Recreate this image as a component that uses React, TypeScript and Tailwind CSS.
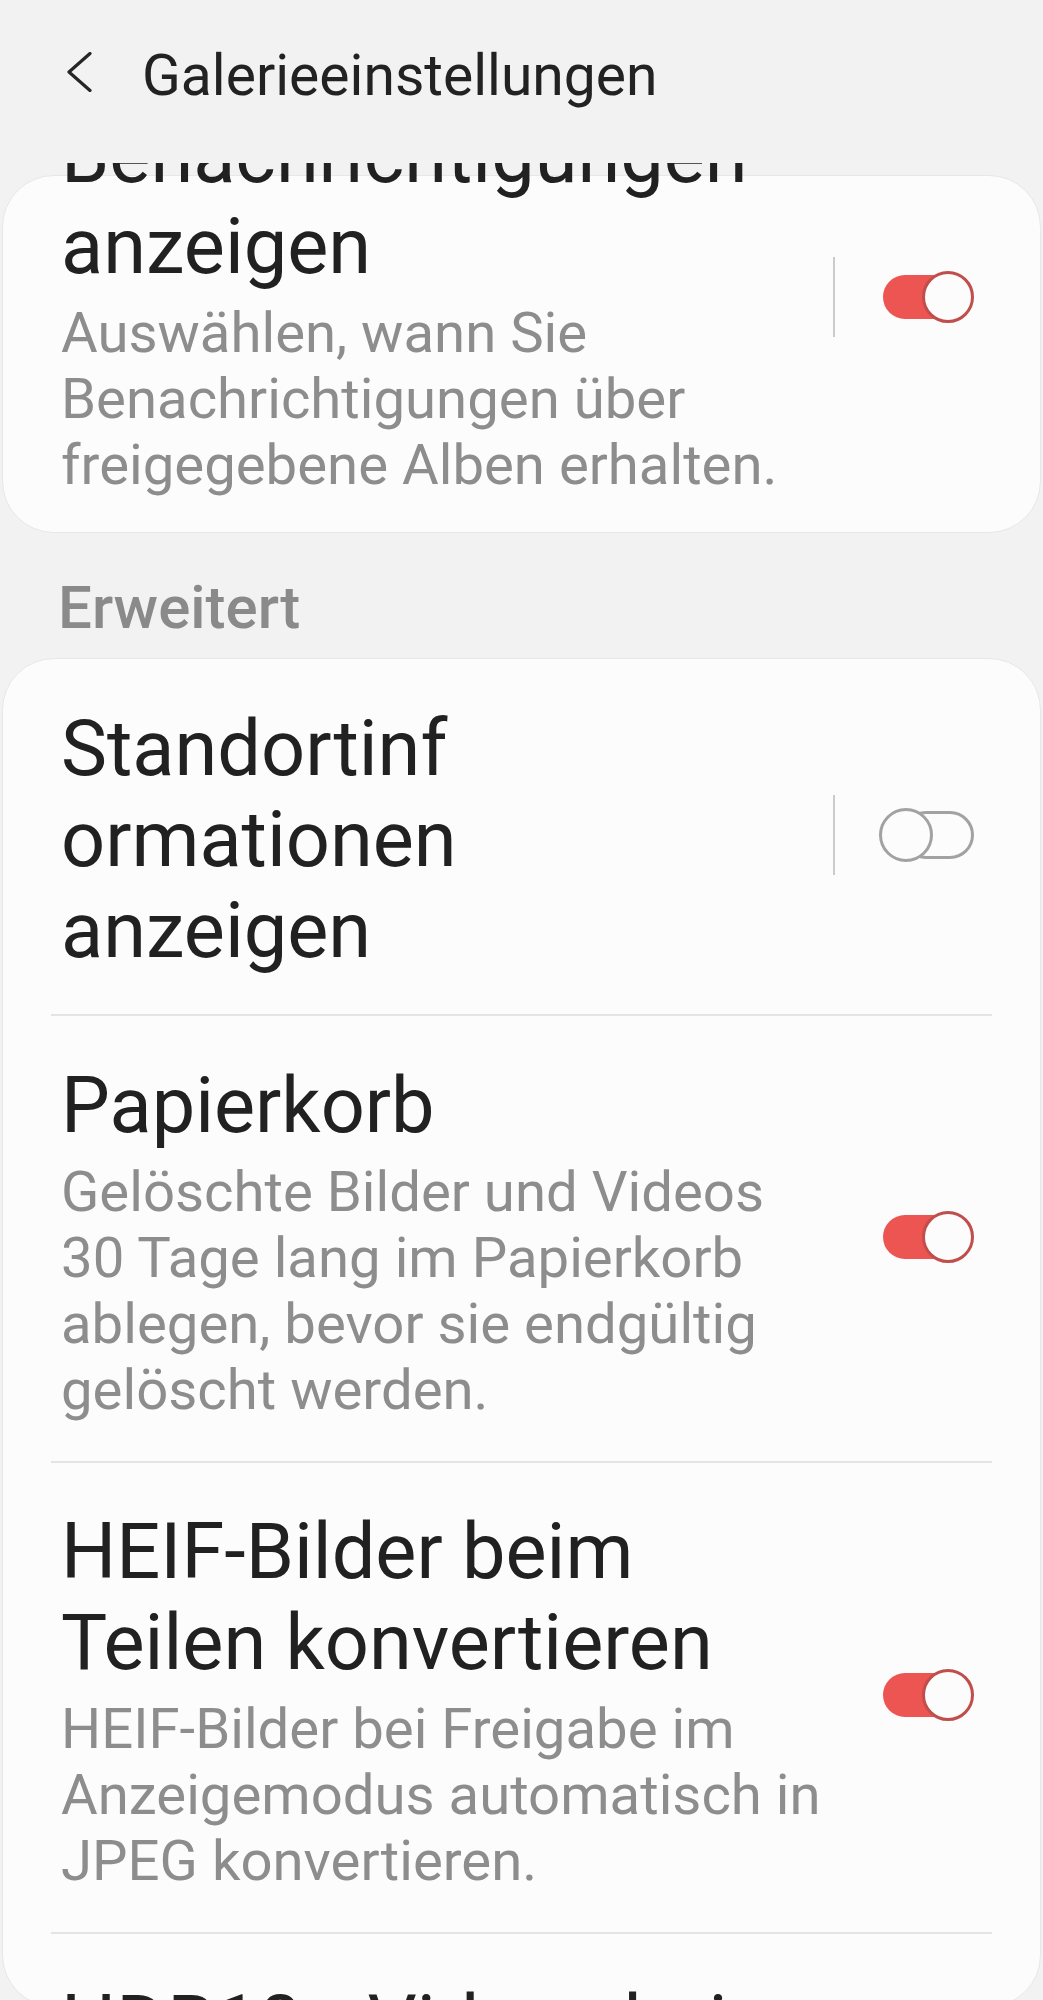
import React from "react";

function ToggleOn() {
  return (
    <div className="relative w-[91px] h-[52px]">
      <div className="absolute left-0 top-[4px] w-[80px] h-[44px] rounded-full bg-[#ec5552]" />
      <div className="absolute right-0 top-0 w-[52px] h-[52px] rounded-full bg-[#fcfcfc] border-[3px] border-[#c04e4b]" />
    </div>
  );
}

function ToggleOff() {
  return (
    <div className="relative w-[95px] h-[54px]">
      <div className="absolute right-0 top-[3px] w-[72px] h-[48px] rounded-full border-[3px] border-[#a2a2a2]" />
      <div className="absolute left-0 top-0 w-[54px] h-[54px] rounded-full bg-[#fcfcfc] border-[3px] border-[#a2a2a2]" />
    </div>
  );
}

function ToggleGroup({ on, divider, className = "" }: { on: boolean; divider: boolean; className?: string }) {
  return (
    <div className={"flex items-center shrink-0 " + className}>
      <div className={divider ? "w-[2px] h-[80px] bg-[#cbcbcb]" : "w-[2px] h-[80px]"} />
      <div className="w-[139px] flex justify-end">{on ? <ToggleOn /> : <ToggleOff />}</div>
    </div>
  );
}

function Title({ lines }: { lines: string[] }) {
  return (
    <div className="text-[77.5px] leading-[91px] text-[#212121] whitespace-nowrap">
      {lines.map((l, i) => (
        <div key={i}>{l}</div>
      ))}
    </div>
  );
}

function Desc({ lines }: { lines: string[] }) {
  return (
    <div className="mt-[8px] text-[56.3px] leading-[66px] text-[#8d8d8d] whitespace-nowrap">
      {lines.map((l, i) => (
        <div key={i}>{l}</div>
      ))}
    </div>
  );
}

function Divider() {
  return <div className="mx-[48px] h-[2px] bg-[#e4e4e4]" />;
}

export default function App() {
  return (
    <div className="h-[2000px] overflow-hidden bg-[#f2f2f2] font-['Roboto',sans-serif]">
      {/* Header */}
      <div className="relative z-10 h-[163px] bg-[#f2f2f2] flex items-start">
        <div className="ml-[66px] mt-[52px] w-[27px] h-[40px]">
          <svg width="27" height="40" viewBox="0 0 27 40" fill="none">
            <polyline
              points="24,1.5 3,20 24,38.5"
              stroke="#262626"
              strokeWidth="3.2"
              strokeLinecap="round"
              strokeLinejoin="round"
            />
          </svg>
        </div>
        <div className="ml-[49px] mt-[44px] text-[57px] leading-[64px] text-[#222222] whitespace-nowrap">
          Galerieeinstellungen
        </div>
      </div>

      {/* Card 1 */}
      <div className="mt-[12px] mx-[2px] rounded-[52px] bg-[#fcfcfc] border border-[#e7e7e7] pl-[58px] pr-[66px] pb-[34px]">
        <div className="flex items-start">
          <div className="flex-1 min-w-0 mt-[-66px]">
            <Title lines={["Benachrichtigungen", "anzeigen"]} />
            <Desc lines={["Auswählen, wann Sie", "Benachrichtigungen über", "freigegebene Alben erhalten."]} />
          </div>
          <ToggleGroup on divider className="mt-[81px]" />
        </div>
      </div>

      {/* Section header */}
      <div className="mt-[41px] pl-[58px] text-[60px] leading-[68px] font-medium text-[#8a8a8a]">Erweitert</div>

      {/* Card 2 */}
      <div className="mt-[16px] mx-[2px] rounded-[52px] bg-[#fcfcfc] border border-[#e7e7e7]">
        <div className="flex items-center pl-[58px] pr-[66px] pt-[44px] pb-[38px]">
          <div className="flex-1 min-w-0">
            <Title lines={["Standortinf", "ormationen", "anzeigen"]} />
          </div>
          <ToggleGroup on={false} divider className="mb-[10px]" />
        </div>
        <Divider />
        <div className="flex items-center pl-[58px] pr-[66px] pt-[44px] pb-[38px]">
          <div className="flex-1 min-w-0">
            <Title lines={["Papierkorb"]} />
            <Desc
              lines={[
                "Gelöschte Bilder und Videos",
                "30 Tage lang im Papierkorb",
                "ablegen, bevor sie endgültig",
                "gelöscht werden.",
              ]}
            />
          </div>
          <ToggleGroup on divider={false} className="mb-[10px]" />
        </div>
        <Divider />
        <div className="flex items-center pl-[58px] pr-[66px] pt-[43px] pb-[38px]">
          <div className="flex-1 min-w-0">
            <Title lines={["HEIF-Bilder beim", "Teilen konvertieren"]} />
            <Desc
              lines={["HEIF-Bilder bei Freigabe im", "Anzeigemodus automatisch in", "JPEG konvertieren."]}
            />
          </div>
          <ToggleGroup on divider={false} className="mb-[10px]" />
        </div>
        <Divider />
        <div className="pl-[58px] pr-[66px] pt-[44px] h-[72px]">
          <div className="text-[77.5px] leading-[91px] text-[#212121] whitespace-nowrap">HDR10+-Videos bei</div>
        </div>
      </div>
    </div>
  );
}
